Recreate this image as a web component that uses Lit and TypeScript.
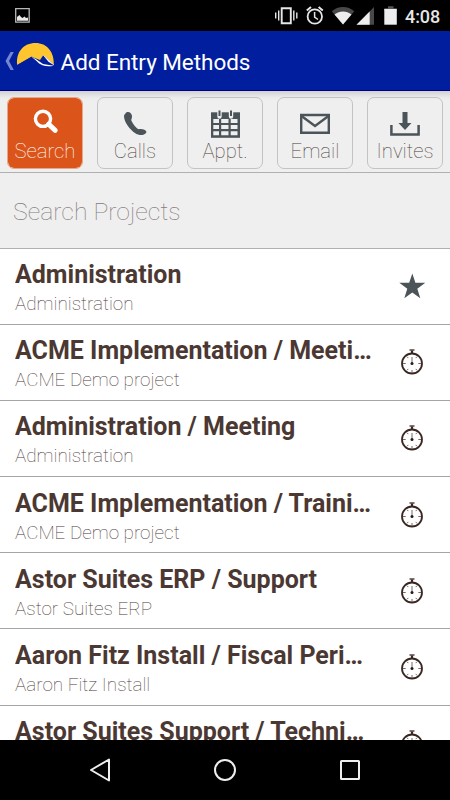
import { LitElement, html, css, svg, nothing } from "lit";
import { customElement, property } from "lit/decorators.js";

const icons: Record<string, unknown> = {
  search: svg`<circle cx="13" cy="10.800" r="7.600" fill="none" stroke="#fff" stroke-width="3.400"/><path d="M18.600 16.200L25.200 22.300" stroke="#fff" stroke-width="5" stroke-linecap="round"/>`,
  calls: svg`<path d="M5.400 5.500C6.600 3.700 9.200 3.600 10.700 5.200C12.200 6.900 12.400 9.200 11.500 11C11.100 11.800 11.300 12.700 12 13.800C13.400 16.500 15.200 18.800 17.200 20.400C18 21 18.700 21.300 19.600 21.100C22 20.700 25 21.700 26.200 23.200C26.700 24 26.200 25 25.200 25.800C23 27.600 18.800 27.500 15.700 25.600C9.700 21.900 4.400 14.500 4 8.600C3.900 7.300 4.600 6.300 5.400 5.500Z" fill="#4b5459"/>`,
  calendar: svg`<path d="M1 4.300H30V29.800H1Z" fill="#4b5459"/><path d="M3.300 11H9V15H3.300ZM11.200 11H18.500V15H11.200ZM20.700 11H27.500V15H20.700ZM3.300 17H9V21H3.300ZM11.200 17H18.500V21H11.200ZM20.700 17H27.500V21H20.700ZM3.300 23.200H9V27.200H3.300ZM11.200 23.200H18.500V27.200H11.200ZM20.700 23.200H27.500V27.200H20.700Z" fill="#efefef"/><path d="M9.500 2.500V8.500M21 2.500V8.500" stroke="#efefef" stroke-width="4.400" stroke-linecap="round"/><path d="M9.500 2.500V8M21 2.500V8" stroke="#4b5459" stroke-width="2"/>`,
  email: svg`<path d="M1.200 7H28.800V24.700H1.200Z" fill="none" stroke="#4b5459" stroke-width="2.400"/><path d="M1.500 8L15 18L28.500 8" fill="none" stroke="#4b5459" stroke-width="2.300"/>`,
  invites: svg`<path d="M12.500 4H17.500V15H21.500L15 22L8.500 15H12.500Z" fill="#4b5459"/><path d="M1.400 17V26.400H28.600V17" fill="none" stroke="#4b5459" stroke-width="2.500"/>`,
  star: svg`<path d="M15.300 2.500L18.400 11.800H28.300L20.300 17.700L23.300 27.300L15.300 21.500L7.300 27.300L10.300 17.700L2.300 11.800H12.200Z" fill="#4b5459"/>`,
  timer: svg`<g fill="none" stroke="#3a2721"><circle cx="15" cy="16.500" r="10" stroke-width="1.800"/><path d="M15 6.500V3.500" stroke-width="2.200"/><path d="M12.500 3H17.500" stroke-width="1.300"/><path d="M15 16.500V10M15 23V25.500M6 16.500H8.700M21.300 16.500H24M10.200 9.800L11.200 11.100M19.800 9.800L18.800 11.100M10.200 23.200L11.200 21.900M19.800 23.200L18.800 21.900" stroke-width=".7"/></g><circle cx="15" cy="16.500" r="1.500" fill="#2b1a17"/>`,
};
const icon = (name: string) => html`<svg class="icon" width="30" height="30" viewBox="0 0 30 30">${icons[name]}</svg>`;

@customElement("status-bar")
export class StatusBar extends LitElement {
  static styles = css`
    :host { display: flex; justify-content: space-between; height: 31px; flex: none; background: #000; color: #e6e6e6; }
    svg { display: block; }
    .right { display: flex; }
    .time { width: 45px; font: 500 18px/33px Roboto, sans-serif; letter-spacing: -.1px; }
  `;
  render() {
    return html`
      <svg width="40" height="31"><path d="M15.700 8.700H29.200V22.200H15.700Z" fill="none" stroke="#b8b8b8" stroke-width="1.300"/><path d="M17 20.800V17L19.500 15L21 17L22.500 18L24.500 16.500L26 18L28 17.500V20.800Z" fill="#e8e8e8"/></svg>
      <div class="right">
        <svg width="130" height="31" viewBox="275 0 130 31">
          <g fill="none" stroke="#e6e6e6">
            <path d="M281.700 8.200H290.800V23.300H281.700Z" stroke-width="1.900"/>
            <path d="M275.700 12.500V18.500M278.700 10.500V20.500M293.800 10.500V20.500M296.800 12.500V18.500" stroke-width="1.400"/>
            <circle cx="314.800" cy="16.500" r="7.200" stroke-width="1.800"/>
            <path d="M306.800 10.500L311 7M322.800 10.500L318.600 7" stroke-width="2"/>
            <path d="M314.600 12V17L318 19.500" stroke-width="1.500"/>
          </g>
          <path d="M331.800 11.200C338 5.500 348 5.500 354.300 11.200L343 24.600Z" fill="#484848"/>
          <path d="M334.500 14.500C339.500 10.500 346.500 10.500 351.500 14.500L343 24.600Z" fill="#eee"/>
          <path d="M374 7V24.700H356.500Z" fill="#484848"/><path d="M369.700 11.500V24.700H356.500Z" fill="#eee"/>
          <path d="M388 6.300H393.500V8.300H396.800V11H384.300V8.300H388Z" fill="#555"/><path d="M384.300 9H396.800V24.700H384.300Z" fill="#eee"/>
        </svg>
        <span class="time">4:08</span>
      </div>`;
  }
}

@customElement("title-bar")
export class TitleBar extends LitElement {
  static styles = css`
    :host { display: flex; height: 60px; flex: none; box-sizing: border-box; background: #001e9e; border-bottom: 1px solid #000086; }
    .title { color: #fff; font: 400 22.500px/62px Roboto, sans-serif; letter-spacing: -.05px; white-space: nowrap; }
  `;
  render() {
    return html`
      <svg width="60.500" height="59" viewBox="0 31 60.500 59">
        <path d="M10.500 52L5.500 61L10.500 70H13.800L9 61L13.800 52Z" fill="#7386ce"/>
        <path d="M17.200 65C15.700 52 23.500 43 35.500 43C47 43 54.500 52 53.800 65L43.800 56L40 60L31.500 56.800Z" fill="#fec52e"/>
        <path d="M31.500 56.800L43.500 55.300L53.800 64.800V66L40 64Z" fill="#001e9e"/>
        <path d="M40 60L43.800 54.500L36 54L31.500 56.800Z" fill="#fec52e"/>
        <path d="M31.500 56.800L36.500 59.500L43 64L53.800 65.700C47 67.500 41.500 65.500 37 62L31.500 57.500Z" fill="#fff"/>
        <path d="M43.500 55.300L53.800 64.800L48.500 61.500Z" fill="#fff" stroke="#fff" stroke-width=".5"/>
        <path d="M17.200 65L31.500 56.800L37 61.500L39 63.500L34 61Z" fill="#001e9e"/>
      </svg>
      <span class="title">Add Entry Methods</span>`;
  }
}

@customElement("entry-tab")
export class EntryTab extends LitElement {
  @property() label = "";
  @property() icon = "";
  @property({ type: Boolean, reflect: true }) active = false;
  static styles = css`
    :host { display: flex; flex-direction: column; align-items: center; box-sizing: border-box; width: 76px; height: 72px; padding-top: 10px; border: 1px solid #c3c3c3; border-radius: 7px; color: #493c37; }
    :host([active]) { background: #db551a padding-box; border-color: #e6a88c; color: #fff; }
    .icon { flex: none; display: block; }
    .label { font: 100 20.300px/26px Roboto, sans-serif; }
  `;
  render() {
    return html`${icon(this.icon)}<span class="label">${this.label}</span>`;
  }
}

@customElement("project-row")
export class ProjectRow extends LitElement {
  @property() name = "";
  @property() project = "";
  @property({ type: Boolean }) starred = false;
  static styles = css`
    :host { display: flex; flex: none; align-items: center; box-sizing: border-box; height: 76.200px; padding: 0 23px 0 15px; border-bottom: 1px solid #a5a5a5; background: #fff; }
    .text { width: 357px; margin-right: 25px; padding-top: 5px; }
    .name { color: #4b3832; font: 700 25px/31px Roboto, sans-serif; white-space: nowrap; overflow: hidden; text-overflow: ellipsis; }
    .project { color: #4b3c38; font: 100 18.900px/28px Roboto, sans-serif; }
    .icon { flex: none; display: block; }
  `;
  render() {
    return html`
      <div class="text"><div class="name">${this.name}</div><div class="project">${this.project || nothing}</div></div>
      ${icon(this.starred ? "star" : "timer")}`;
  }
}

@customElement("nav-bar")
export class NavBar extends LitElement {
  static styles = css`
    :host { display: flex; flex: none; justify-content: center; align-items: center; gap: 95px; height: 60px; background: #000; }
    svg { display: block; }
  `;
  render() {
    return html`
      <svg width="30" height="30"><path d="M6 15L24 4.500V25.500Z" fill="none" stroke="#eee" stroke-width="2" stroke-linejoin="round"/></svg>
      <svg width="30" height="30"><circle cx="15" cy="15" r="10" fill="none" stroke="#eee" stroke-width="2"/></svg>
      <svg width="30" height="30"><rect x="6" y="6" width="18" height="18" rx=".5" fill="none" stroke="#eee" stroke-width="2"/></svg>`;
  }
}

const tabs = [
  ["Search", "search"],
  ["Calls", "calls"],
  ["Appt.", "calendar"],
  ["Email", "email"],
  ["Invites", "invites"],
];

const projects = [
  ["Administration", "Administration"],
  ["ACME Implementation / Meeting", "ACME Demo project"],
  ["Administration / Meeting", "Administration"],
  ["ACME Implementation / Training", "ACME Demo project"],
  ["Astor Suites ERP / Support", "Astor Suites ERP"],
  ["Aaron Fitz Install / Fiscal Periods", "Aaron Fitz Install"],
  ["Astor Suites Support / Technical", "Astor Suites Support"],
];

@customElement("app-root")
export class AppRoot extends LitElement {
  static styles = css`
    :host { display: flex; flex-direction: column; width: 450px; height: 800px; overflow: hidden; background: #fff; }
    .tabs { display: flex; flex: none; justify-content: space-between; box-sizing: border-box; height: 82px; padding: 6px 7px 0; border-bottom: 1px solid #b0b0b0; background: linear-gradient(#d2d2d2, #ececec 7px, #efefef 10px); }
    .search { display: flex; flex: none; align-items: center; box-sizing: border-box; height: 75.500px; padding: 4px 13px 0; border-bottom: 1px solid #b0b0b0; background: #efefef; color: #857b7b; font: 100 24.800px/30px Roboto, sans-serif; }
    .list { display: flex; flex: 1; min-height: 0; flex-direction: column; overflow: hidden; }
  `;
  render() {
    return html`
      <status-bar></status-bar>
      <title-bar></title-bar>
      <div class="tabs">${tabs.map(([label, name], i) => html`<entry-tab .label=${label} .icon=${name} ?active=${i === 0}></entry-tab>`)}</div>
      <div class="search">Search Projects</div>
      <div class="list">${projects.map(([name, project], i) => html`<project-row .name=${name} .project=${project} .starred=${i === 0}></project-row>`)}</div>
      <nav-bar></nav-bar>`;
  }
}
